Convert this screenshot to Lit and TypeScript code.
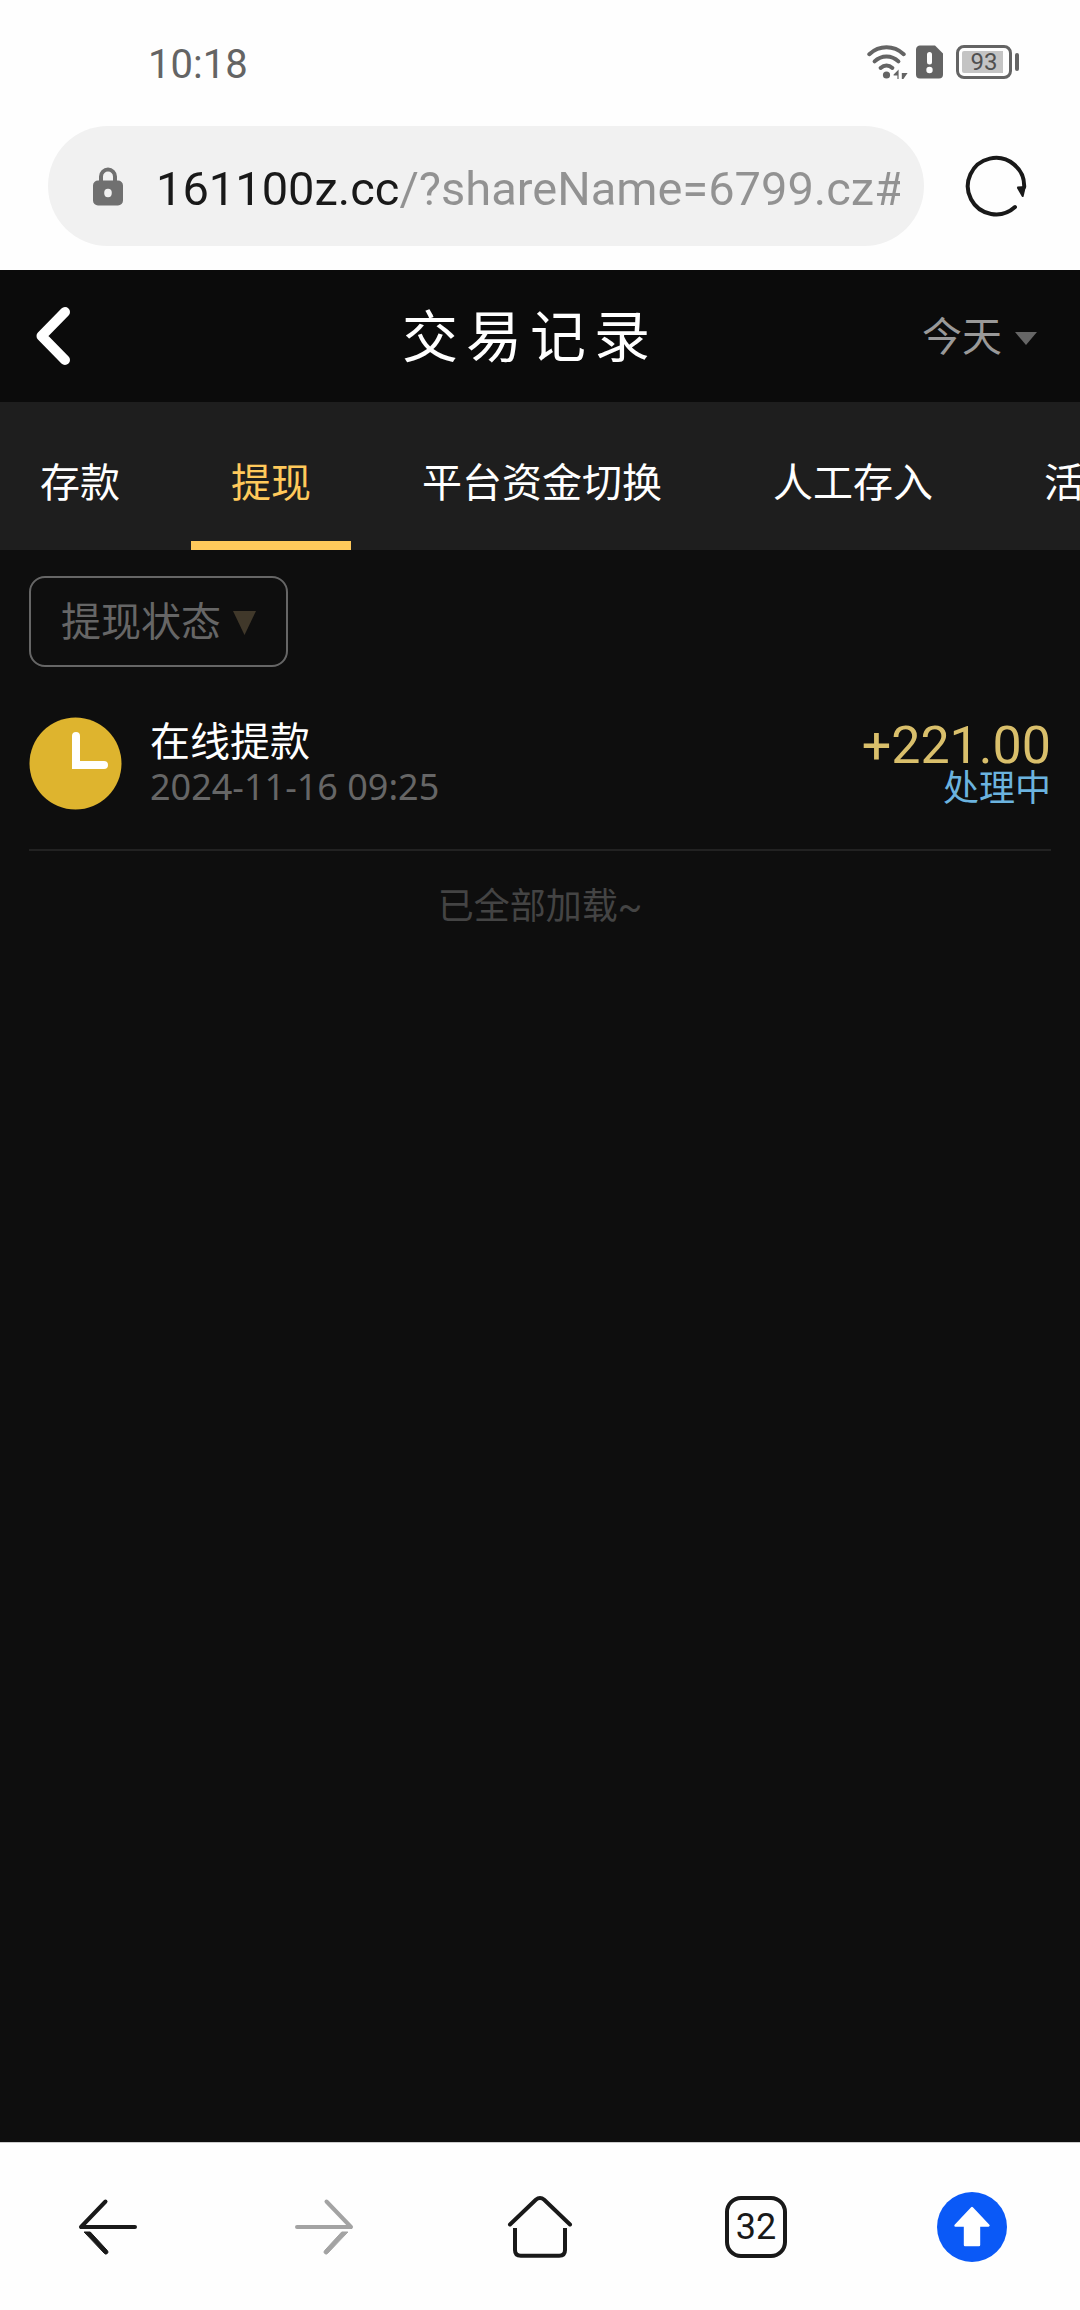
import { LitElement, html, css, svg } from "lit";
import { customElement, state } from "lit/decorators.js";
import { classMap } from "lit/directives/class-map.js";

interface LedgerRecord {
  title: string;
  time: string;
  amount: string;
  status: string;
}

@customElement("status-bar")
class StatusBar extends LitElement {
  static styles = css`
    :host {
      display: block;
      color: #646464;
    }
    .bar {
      display: flex;
      align-items: center;
      justify-content: space-between;
      height: 48px;
      padding: 38px 61px 40px 148px;
    }
    .time {
      font-size: 40px;
      line-height: 48px;
      padding-top: 6px;
    }
    .icons {
      display: flex;
      align-items: center;
    }
    .icons svg {
      display: block;
    }
    .sim {
      margin-left: 8px;
    }
    .battery {
      display: flex;
      align-items: center;
      gap: 3px;
      margin-left: 13px;
    }
    .shell {
      box-sizing: border-box;
      display: flex;
      width: 56px;
      height: 34px;
      padding: 3px;
      border: 3px solid currentColor;
      border-radius: 8px;
    }
    .charge {
      flex: 1;
      border-radius: 2px;
      background: linear-gradient(90deg, #c4c4c4 93%, transparent 93%);
      color: #505050;
      font-size: 24px;
      line-height: 23px;
      text-align: center;
    }
    .cap {
      width: 4px;
      height: 18px;
      border-radius: 2px;
      background: currentColor;
    }
  `;

  render() {
    return html`
      <div class="bar">
        <span class="time">10:18</span>
        <div class="icons">
          <svg width="41" height="34" viewBox="0 0 41 34" role="img" aria-label="Wi-Fi">
            <g fill="none" stroke="currentColor" stroke-width="4" stroke-linecap="round">
              <path d="M2.3 9.2C12.5 0 26.5 0 36.7 9.2" />
              <path d="M7.6 16.4C14.5 9.8 24.5 9.8 31.4 16.4" />
              <path d="M13.6 23C17.2 19.8 21.8 19.8 25.4 23" />
            </g>
            <circle cx="19.5" cy="30" r="3.6" fill="currentColor" />
            <path d="M26.6 29.5L31.6 24.6V34H30.4V30.6H26.600ZM34.800 24.6V28H40.6L36.4 34H34.800Z" fill="currentColor" />
          </svg>
          <svg class="sim" width="27" height="34" viewBox="0 0 27 34" role="img" aria-label="SIM">
            <path d="M4.5 .5H19L27 8.5V29.5A4 4 0 0 1 23 33.5H4A4 4 0 0 1 0 29.5V4.5A4 4 0 0 1 4.5 .5Z" fill="currentColor" />
            <path d="M13.5 9.5V17" stroke="#fefefe" stroke-width="5" stroke-linecap="round" />
            <circle cx="13.5" cy="25" r="3.2" fill="#fefefe" />
          </svg>
          <div class="battery">
            <div class="shell"><span class="charge">93</span></div>
            <span class="cap"></span>
          </div>
        </div>
      </div>
    `;
  }
}

@customElement("address-bar")
class AddressBar extends LitElement {
  static styles = css`
    :host {
      display: block;
    }
    .row {
      display: flex;
      align-items: center;
      gap: 36px;
      padding: 0 48px 24px;
    }
    .pill {
      flex: 1;
      min-width: 0;
      box-sizing: border-box;
      display: flex;
      align-items: center;
      gap: 33px;
      height: 120px;
      padding: 0 24px 0 45px;
      border-radius: 60px;
      background: #f1f1f1;
    }
    .lock {
      flex: none;
      display: block;
    }
    .url {
      flex: 1;
      min-width: 0;
      height: 72px;
      padding: 4px 0 0;
      border: 0;
      outline: 0;
      font: inherit;
      font-size: 47px;
      color: transparent;
      caret-color: #191919;
      background: linear-gradient(90deg, #191919 242px, #929292 242px);
      -webkit-background-clip: text;
      background-clip: text;
    }
    .reload {
      flex: none;
      width: 72px;
      height: 72px;
      padding: 0;
      border: 0;
      background: none;
      color: #191919;
    }
    .reload svg {
      display: block;
    }
  `;

  render() {
    return html`
      <div class="row">
        <div class="pill">
          <svg class="lock" width="30" height="40" viewBox="0 0 30 40" aria-hidden="true">
            <path d="M8 17V10.5a7 7 0 0 1 14 0V17" fill="none" stroke="#707070" stroke-width="4" />
            <path d="M5 14.5H25A5 5 0 0 1 30 19.5V34.5A5 5 0 0 1 25 39.5H5A5 5 0 0 1 0 34.5V19.5A5 5 0 0 1 5 14.5Z" fill="#707070" />
            <ellipse cx="15" cy="27" rx="3.8" ry="4.2" fill="#f1f1f1" />
          </svg>
          <input class="url" type="text" aria-label="网址" spellcheck="false" value="161100z.cc/?shareName=6799.cz#/record" />
        </div>
        <button class="reload" type="button" aria-label="刷新">
          <svg width="72" height="72" viewBox="0 0 72 72">
            <path d="M55 57A28.2 28.2 0 1 1 64.2 37" fill="none" stroke="currentColor" stroke-width="4" stroke-linecap="round" />
            <path d="M57.5 36.5L66 36L63.6 46.4Q62.8 47.6 61.8 46.4L57.2 38.4Q56.6 37 57.5 36.5Z" fill="currentColor" />
          </svg>
        </button>
      </div>
    `;
  }
}

@customElement("record-page")
class RecordPage extends LitElement {
  static styles = css`
    :host {
      display: block;
      background: #0e0e0e;
      color: #fff;
    }
    button,
    select {
      font: inherit;
      color: inherit;
      border: 0;
      background: none;
      padding: 0;
      margin: 0;
    }
    select {
      appearance: none;
      outline: 0;
      padding-top: 3px;
    }
    svg {
      display: block;
      flex: none;
    }
    .head {
      display: grid;
      grid-template-columns: 1fr auto 1fr;
      align-items: center;
      height: 132px;
      padding: 0 43px 0 23px;
      background: #0b0b0b;
    }
    .back {
      justify-self: start;
      padding: 12px;
    }
    .title {
      margin: 0;
      padding-top: 3px;
      font-size: 56px;
      line-height: 80px;
      font-weight: 400;
      letter-spacing: 8px;
    }
    .range {
      justify-self: end;
      display: flex;
      align-items: center;
      gap: 13px;
      color: #999;
      font-size: 40px;
      line-height: 56px;
    }
    .range svg {
      margin-top: 3px;
    }
    .tabs {
      display: flex;
      gap: 31px;
      height: 148px;
      overflow: hidden;
      background: #1e1e1e;
    }
    .tab {
      flex: none;
      box-sizing: border-box;
      padding: 24px 40px 0;
      border-bottom: 9px solid transparent;
      font-size: 40px;
      line-height: 56px;
      white-space: nowrap;
    }
    .tab.on {
      color: #ffc95b;
      border-color: #ffc95b;
    }
    .body {
      padding: 26px 29px 0;
    }
    .filter {
      box-sizing: border-box;
      display: inline-flex;
      align-items: center;
      gap: 12px;
      height: 91px;
      padding: 0 30px;
      border: 2px solid #666;
      border-radius: 16px;
      color: #666;
      font-size: 40px;
      line-height: 56px;
      vertical-align: top;
    }
    .filter svg {
      margin-top: 3px;
    }
    .list {
      margin: 0;
      padding: 0;
      list-style: none;
    }
    .item {
      display: flex;
      align-items: center;
      gap: 28px;
      margin-top: 10px;
      padding: 40px 0 39px;
      border-bottom: 2px solid #222;
    }
    .info,
    .sum {
      display: flex;
      flex-direction: column;
    }
    .info {
      flex: 1;
      padding-top: 3px;
    }
    .sum {
      padding-top: 7px;
      text-align: right;
    }
    .name {
      font-size: 40px;
      line-height: 44px;
    }
    .when {
      color: #666;
      font-family: "Noto Sans", sans-serif;
      font-size: 36px;
      line-height: 44px;
    }
    .amount {
      color: #d9bf6b;
      font-size: 52px;
      line-height: 44px;
    }
    .status {
      color: #6bb3df;
      font-size: 36px;
      line-height: 42px;
    }
    .end {
      margin: 0;
      padding: 30px 0;
      color: #444;
      font-size: 36px;
      line-height: 52px;
      text-align: center;
    }
  `;

  @state() private active = 1;

  private tabs = ["存款", "提现", "平台资金切换", "人工存入", "活动"];

  private records: LedgerRecord[] = [
    { title: "在线提款", time: "2024-11-16 09:25", amount: "+221.00", status: "处理中" },
  ];

  render() {
    return html`
      <header class="head">
        <button class="back" type="button" aria-label="返回">
          <svg width="36" height="60" viewBox="0 0 36 60">
            <path d="M30 6L6.500 30L30 54" fill="none" stroke="#fff" stroke-width="10" stroke-linecap="round" stroke-linejoin="round" />
          </svg>
        </button>
        <h1 class="title">交易记录</h1>
        <label class="range">
          <select aria-label="日期">
            <option>今天</option>
          </select>
          <svg width="22" height="14" viewBox="0 0 22 14"><path d="M0 1H22L11 14Z" fill="#666" /></svg>
        </label>
      </header>
      <nav class="tabs">
        ${this.tabs.map(
          (name, i) => html`
            <button type="button" class=${classMap({ tab: true, on: i === this.active })} @click=${() => (this.active = i)}>${name}</button>
          `
        )}
      </nav>
      <div class="body">
        <label class="filter">
          <select aria-label="提现状态">
            <option>提现状态</option>
          </select>
          <svg width="23" height="24" viewBox="0 0 23 24"><path d="M0 0H23L11.500 24Z" fill="#40382a" /></svg>
        </label>
        <ul class="list">
          ${this.records.map(
            (r) => html`
              <li class="item">
                <svg width="93" height="93" viewBox="0 0 93 93" aria-hidden="true">
                  <circle cx="46.500" cy="46.500" r="46" fill="#deb42e" />
                  <path d="M47 19V48H75" fill="none" stroke="#fff" stroke-width="8" stroke-linecap="round" stroke-linejoin="miter" />
                </svg>
                <div class="info">
                  <span class="name">${r.title}</span>
                  <time class="when">${r.time}</time>
                </div>
                <div class="sum">
                  <span class="amount">${r.amount}</span>
                  <span class="status">${r.status}</span>
                </div>
              </li>
            `
          )}
        </ul>
        <p class="end">已全部加载~</p>
      </div>
    `;
  }
}

@customElement("browser-toolbar")
class BrowserToolbar extends LitElement {
  static styles = css`
    :host {
      display: block;
    }
    .bar {
      display: grid;
      grid-template-columns: repeat(5, 1fr);
      height: 167px;
      border-top: 1px solid #ccc;
      background: #fefefe;
      color: #191919;
    }
    .key {
      display: flex;
      align-items: center;
      justify-content: center;
      padding: 0;
      border: 0;
      background: none;
      font: inherit;
      color: inherit;
    }
    .key:disabled {
      color: #a3a3a3;
    }
    .count {
      box-sizing: border-box;
      display: flex;
      align-items: center;
      justify-content: center;
      width: 62px;
      height: 62px;
      border: 4px solid currentColor;
      border-radius: 16px;
      font-size: 36px;
      line-height: 40px;
    }
  `;

  private leftArrow = svg`
    <path d="M33.500 10.500L9 36H63" />
    <path d="M12.500 41H18.300L35.400 59.600A2 2 0 0 1 32.400 62.400Z" fill="currentColor" stroke="currentColor" stroke-width="1" />
  `;

  private rightArrow = svg`
    <path d="M38.500 10.500L63 36H9" />
    <path d="M59.500 41H53.700L36.600 59.600A2 2 0 0 0 39.600 62.400Z" fill="currentColor" stroke="currentColor" stroke-width="1" />
  `;

  render() {
    return html`
      <nav class="bar">
        <button class="key" type="button" aria-label="后退">
          <svg width="72" height="72" viewBox="0 0 72 72" fill="none" stroke="currentColor" stroke-width="4" stroke-linecap="round" stroke-linejoin="round">
            ${this.leftArrow}
          </svg>
        </button>
        <button class="key" type="button" aria-label="前进" disabled>
          <svg width="72" height="72" viewBox="0 0 72 72" fill="none" stroke="currentColor" stroke-width="4" stroke-linecap="round" stroke-linejoin="round">
            ${this.rightArrow}
          </svg>
        </button>
        <button class="key" type="button" aria-label="主页">
          <svg width="72" height="72" viewBox="0 0 72 72" fill="none" stroke="currentColor" stroke-width="4" stroke-linecap="round">
            <path d="M6 33.500L31.800 8.800Q36 5.200 40.200 8.800L66 33.500" />
            <path d="M11 37V59Q11 64.800 16.800 64.800H55.200Q61 64.800 61 59V37" stroke-linecap="butt" />
          </svg>
        </button>
        <button class="key" type="button" aria-label="标签页"><span class="count">32</span></button>
        <button class="key" type="button" aria-label="回到顶部">
          <svg width="72" height="72" viewBox="0 0 72 72">
            <circle cx="36" cy="36" r="35" fill="#0a59f7" />
            <path d="M36 17L52.500 34.500H43V54H29V34.500H19.500Z" fill="#fff" stroke="#fff" stroke-width="2.400" stroke-linejoin="round" />
          </svg>
        </button>
      </nav>
    `;
  }
}

@customElement("app-root")
class AppRoot extends LitElement {
  static styles = css`
    :host {
      display: flex;
      flex-direction: column;
      min-height: 100vh;
      background: #fefefe;
      font-family: Roboto, "Noto Sans CJK SC", sans-serif;
    }
    .page {
      flex: 1;
    }
  `;

  render() {
    return html`
      <status-bar></status-bar>
      <address-bar></address-bar>
      <record-page class="page"></record-page>
      <browser-toolbar></browser-toolbar>
    `;
  }
}
